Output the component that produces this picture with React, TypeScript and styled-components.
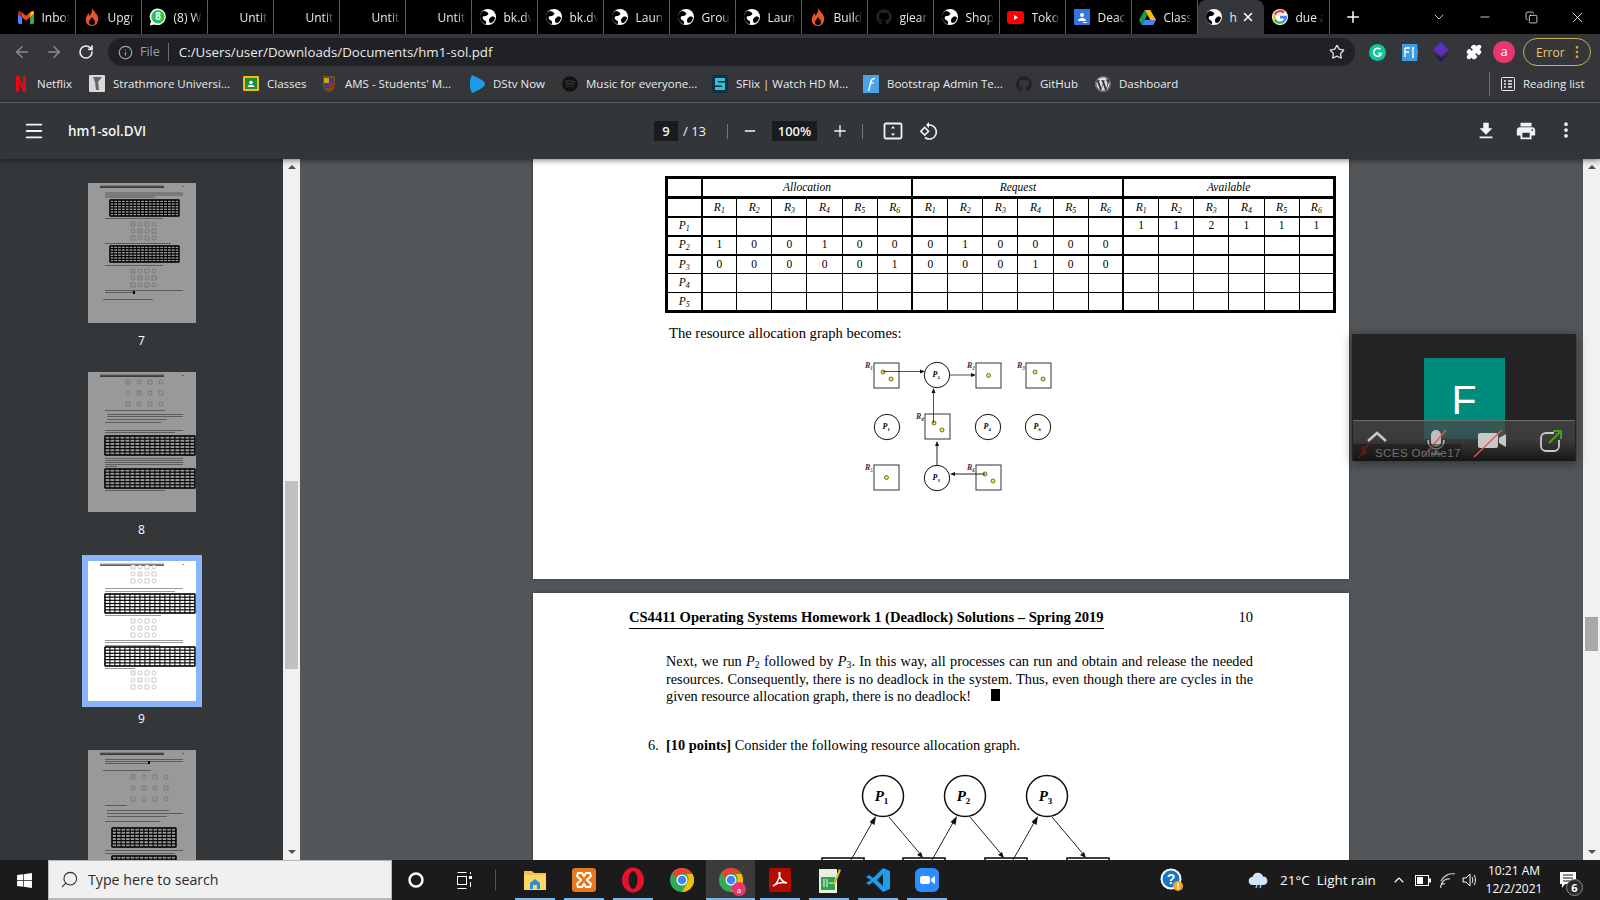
import React from 'react';
import styled, { createGlobalStyle } from 'styled-components';
import {
  ArrowLeft, ArrowRight, RotateCw, Info, Star, Puzzle, Menu, Minus, Plus,
  MoreVertical, X, ChevronDown, ChevronUp, Search, Copy,
} from 'lucide-react';
import { FaGithub, FaWordpress, FaSpotify, FaWindows } from 'react-icons/fa';
import { MdFileDownload, MdPrint } from 'react-icons/md';

const GlobalStyle = createGlobalStyle`
  html, body { margin: 0; padding: 0; height: 100%; overflow: hidden; background: #000; }
  * { box-sizing: border-box; }
`;

const Screen = styled.div`
  width: 1600px;
  height: 900px;
  display: flex;
  flex-direction: column;
  font-family: "Open Sans", "Noto Sans", sans-serif;
  overflow: hidden;
  position: relative;
`;

/* ---------- tab strip ---------- */
const TabStrip = styled.div`
  height: 34px;
  flex: none;
  background: #000;
  display: flex;
  padding-left: 9.5px;
  position: relative;
`;

const Tab = styled.div<{ $active?: boolean }>`
  width: 66px;
  height: 34px;
  flex: none;
  display: flex;
  align-items: center;
  gap: 7px;
  padding-left: 7px;
  color: #e8eaed;
  font-size: 12px;
  position: relative;
  background: ${p => (p.$active ? '#35363a' : 'transparent')};
  border-radius: ${p => (p.$active ? '8px 8px 0 0' : '0')};
  border-right: ${p => (p.$active ? 'none' : '1px solid #5a5a5a')};
  background-clip: ${p => (p.$active ? 'border-box' : 'content-box')};
`;

const TabIcon = styled.span`
  width: 18px;
  height: 18px;
  flex: none;
  display: flex;
  align-items: center;
  justify-content: center;
`;

const TabText = styled.span`
  width: 28px;
  overflow: hidden;
  white-space: nowrap;
  -webkit-mask-image: linear-gradient(90deg, #000 70%, transparent);
  mask-image: linear-gradient(90deg, #000 70%, transparent);
`;

const TabClose = styled(X)`
  position: absolute;
  right: 9px;
  top: 10px;
  color: #fff;
`;

const NewTab = styled.div`
  width: 46px;
  display: flex;
  align-items: center;
  justify-content: center;
  color: #fff;
`;

const WindowControls = styled.div`
  margin-left: auto;
  display: flex;
  align-items: center;
  color: #f0f0f0;
`;

const WinButton = styled.div<{ $w: number }>`
  width: ${p => p.$w}px;
  display: flex;
  justify-content: center;
`;

/* ---------- address row ---------- */
const AddressRow = styled.div`
  height: 33px;
  flex: none;
  background: #35363a;
  display: flex;
  align-items: center;
  padding: 3px 9px 0 0;
  color: #dadce0;
`;

const NavButton = styled.div<{ $w: number; $dim?: boolean }>`
  width: ${p => p.$w}px;
  flex: none;
  display: flex;
  justify-content: center;
  color: ${p => (p.$dim ? '#8a8b8e' : '#e8eaed')};
`;

const Omnibox = styled.div`
  width: 1247px;
  height: 28px;
  flex: none;
  margin-left: 1px;
  border-radius: 14px;
  background: #202124;
  display: flex;
  align-items: center;
  padding: 0 10px;
  font-size: 13.3px;
`;

const FileChip = styled.span`
  color: #9aa0a6;
  margin-left: 7px;
  padding-right: 8px;
  border-right: 1px solid #6d6f72;
  font-size: 12.5px;
  line-height: 18px;
`;

const Url = styled.span`
  color: #e8eaed;
  margin-left: 10px;
`;

const StarButton = styled(Star)`
  margin-left: auto;
  color: #dadce0;
`;

const ExtSlot = styled.div<{ $w: number }>`
  width: ${p => p.$w}px;
  flex: none;
  display: flex;
  justify-content: center;
  align-items: center;
`;

const Avatar = styled.div`
  width: 22px;
  height: 22px;
  border-radius: 50%;
  background: #e9366f;
  color: #fff;
  font-size: 13px;
  display: flex;
  align-items: center;
  justify-content: center;
  padding-bottom: 2px;
`;

const ErrorPill = styled.div`
  width: 68px;
  height: 28px;
  flex: none;
  border: 1px solid #d3ab5b;
  border-radius: 14px;
  color: #f1c776;
  font-size: 12px;
  display: flex;
  align-items: center;
  justify-content: space-between;
  padding: 0 5px 0 12px;
`;

/* ---------- bookmarks ---------- */
const BookmarkBar = styled.div`
  height: 36px;
  flex: none;
  background: #35363a;
  border-bottom: 1px solid #6a6b6e;
  display: flex;
  align-items: center;
  padding: 0 0 2px 13px;
  font-size: 11.5px;
  color: #e8eaed;
  white-space: nowrap;
`;

const Bookmark = styled.div<{ $w: number }>`
  width: ${p => p.$w}px;
  flex: none;
  display: flex;
  align-items: center;
  gap: 8px;
`;

const BookmarkIcon = styled.span`
  width: 16px;
  height: 16px;
  flex: none;
  display: flex;
  align-items: center;
  justify-content: center;
`;

const ReadingList = styled.div`
  margin-left: auto;
  display: flex;
  align-items: center;
  gap: 8px;
  border-left: 1px solid #6a6b6e;
  height: 24px;
  width: 111px;
  padding-left: 11px;
`;

/* ---------- pdf toolbar ---------- */
const PdfToolbar = styled.div`
  height: 56px;
  flex: none;
  background: #323639;
  display: flex;
  align-items: center;
  color: #f1f3f4;
  position: relative;
  z-index: 2;
  box-shadow: 0 1px 6px rgba(0, 0, 0, 0.55);
`;

const MenuSlot = styled.div`
  width: 68px;
  flex: none;
  display: flex;
  justify-content: center;
`;

const DocTitle = styled.div`
  width: 586px;
  flex: none;
  font-size: 13.5px;
  font-weight: 600;
`;

const NumField = styled.div<{ $w: number }>`
  width: ${p => p.$w}px;
  height: 20px;
  flex: none;
  background: #191b1c;
  font-size: 13px;
  font-weight: 600;
  display: flex;
  align-items: center;
  justify-content: center;
`;

const PageTotal = styled.div`
  width: 49px;
  flex: none;
  font-size: 13px;
  padding-left: 5px;
`;

const ToolDivider = styled.div`
  width: 1px;
  height: 15px;
  flex: none;
  background: #70757a;
`;

const ToolSlot = styled.div<{ $w: number }>`
  width: ${p => p.$w}px;
  flex: none;
  display: flex;
  justify-content: center;
  svg { flex: none; }
`;

const ToolRight = styled.div`
  margin-left: auto;
  display: flex;
  padding-right: 14px;
`;

/* ---------- body ---------- */
const Workspace = styled.div`
  flex: 1;
  min-height: 0;
  display: flex;
`;

const Sidebar = styled.div`
  width: 300px;
  flex: none;
  display: flex;
  background: #33373a;
`;

const ThumbList = styled.div`
  width: 283px;
  flex: none;
  display: flex;
  flex-direction: column;
  align-items: center;
  padding-top: 18px;
  overflow: hidden;
`;

const ThumbFrame = styled.div<{ $selected?: boolean }>`
  flex: none;
  padding: 6px;
  background: ${p => (p.$selected ? '#8ab4f8' : 'transparent')};
  display: flex;
`;

const ThumbNumber = styled.div`
  flex: none;
  height: 16px;
  line-height: 16px;
  margin: 4px 0 17px;
  color: #fff;
  font-size: 12px;
`;

const Track = styled.div`
  width: 17px;
  flex: none;
  background: #f1f1f1;
  display: flex;
  flex-direction: column;
  align-items: center;
`;

const ScrollArrow = styled.div<{ $down?: boolean }>`
  width: 0;
  height: 0;
  flex: none;
  margin: ${p => (p.$down ? 'auto 0 6px' : '6px 0 0')};
  border-left: 4px solid transparent;
  border-right: 4px solid transparent;
  border-${p => (p.$down ? 'top' : 'bottom')}: 4px solid #505050;
`;

const ScrollThumb = styled.div<{ $top: number; $h: number }>`
  width: 13px;
  height: ${p => p.$h}px;
  margin-top: ${p => p.$top}px;
  flex: none;
  background: #c1c1c1;
`;

const Viewer = styled.div`
  flex: 1;
  min-width: 0;
  background: #525659;
  display: flex;
  flex-direction: column;
  align-items: center;
  overflow: hidden;
  position: relative;
  padding-right: 18px;
`;

const MainTrack = styled(Track)`
  position: absolute;
  right: 0;
  top: 0;
  bottom: 0;
`;

const MainThumb = styled(ScrollThumb)`
  background: #a8a8a8;
`;

const Sheet = styled.div<{ $h: number }>`
  width: 816px;
  height: ${p => p.$h}px;
  flex: none;
  background: #fff;
  color: #000;
  font-family: "Liberation Serif", "Times New Roman", serif;
  box-shadow: 0 0 3px rgba(0, 0, 0, 0.35);
`;

const TopSheet = styled(Sheet)`
  padding: 17px 13px 0 132px;
  margin-bottom: 14px;
`;

const BottomSheet = styled(Sheet)`
  padding: 15px 96px 0 96px;
`;

const Matrix = styled.table`
  width: 671px;
  border-collapse: collapse;
  table-layout: fixed;
  border: 3px solid #000;
  font-size: 11.5px;
  text-align: center;
`;

const Cell = styled.td<{ $h?: number; $thickB?: number; $thickR?: number }>`
  height: ${p => p.$h ?? 19}px;
  padding: 0;
  border: 1px solid #000;
  border-bottom-width: ${p => p.$thickB ?? 1}px;
  border-right-width: ${p => p.$thickR ?? 1}px;
  line-height: 1;
`;

const HeadCell = styled(Cell)`
  font-style: italic;
`;

const Sub = styled.sub`
  font-size: 0.68em;
  line-height: 0;
  vertical-align: -0.25em;
`;

const Caption = styled.p`
  margin: 11px 0 0 4px;
  font-size: 14.6px;
  line-height: 18px;
`;

const GraphOne = styled.svg`
  display: block;
  margin: 13px 0 0 185px;
`;

const RunningHead = styled.div`
  display: flex;
  justify-content: space-between;
  align-items: flex-end;
  height: 21px;
  font-size: 14.57px;
  line-height: 18px;
`;

const HeadTitle = styled.span`
  font-weight: 700;
  border-bottom: 1.5px solid #000;
  height: 21px;
  white-space: nowrap;
`;

const HeadPage = styled.span`
  height: 21px;
`;

const Body = styled.p`
  margin: 24px 0 0 37px;
  font-size: 14.3px;
  word-spacing: -0.2px;
  line-height: 17.7px;
  text-align: justify;
`;

const Tombstone = styled.span`
  display: inline-block;
  width: 9px;
  height: 12px;
  margin-left: 20px;
  background: #000;
`;

const Question = styled.div`
  margin: 30px 0 0 19px;
  font-size: 14.4px;
  line-height: 18px;
  white-space: nowrap;
`;

const GraphTwo = styled.svg`
  display: block;
  margin: 16px 0 0 -1px;
  overflow: visible;
`;

/* ---------- floating zoom tile ---------- */
const ZoomTile = styled.div`
  position: absolute;
  left: 1352px;
  top: 334px;
  width: 224px;
  height: 127px;
  background: #232323;
  box-shadow: 0 2px 10px rgba(0, 0, 0, 0.45);
  display: flex;
  justify-content: center;
  z-index: 3;
  overflow: hidden;
  padding-top: 24px;
`;

const ZoomAvatar = styled.div`
  width: 81px;
  height: 81px;
  background: #008c7c;
  color: #fff;
  font-family: "Liberation Sans", Arial, sans-serif;
  font-size: 41px;
  display: flex;
  align-items: center;
  justify-content: center;
  padding-top: 3px;
`;

const ZoomBar = styled.div`
  position: absolute;
  left: 1px;
  right: 1px;
  bottom: 0;
  height: 41px;
  border-top: 1px solid #6e6e6e;
  background: linear-gradient(180deg, rgba(72, 72, 72, 0.72), rgba(66, 66, 66, 0.78) 45%, rgba(22, 22, 22, 0.96));
`;

const ZoomBarIcons = styled.svg`
  position: absolute;
  left: 0;
  top: 0;
`;

const ZoomName = styled.span`
  position: absolute;
  left: 0;
  bottom: 0;
  width: 108px;
  height: 17px;
  line-height: 17px;
  padding-left: 22px;
  background: rgba(20, 20, 20, 0.45);
  color: #6f7174;
  font-size: 11.7px;
  letter-spacing: 0.3px;
  white-space: nowrap;
  font-family: "Liberation Sans", Arial, sans-serif;
`;

/* ---------- taskbar ---------- */
const Taskbar = styled.div`
  height: 40px;
  flex: none;
  background: #1b1b1b;
  display: flex;
  align-items: stretch;
  color: #fff;
  position: relative;
  z-index: 4;
`;

const StartSlot = styled.div`
  width: 48px;
  flex: none;
  display: flex;
  align-items: center;
  justify-content: center;
`;

const SearchBox = styled.div`
  width: 344px;
  flex: none;
  background: #f0f0f0;
  border: 1px solid #b8b8b8;
  border-width: 1px 1px 2px;
  display: flex;
  align-items: center;
  color: #2b2b2b;
  font-size: 14.2px;
  padding-left: 11px;
  gap: 9px;
`;

const SearchGlass = styled(Search)`
  transform: scaleX(-1);
`;

const TrayButton = styled.div<{ $w: number }>`
  width: ${p => p.$w}px;
  flex: none;
  display: flex;
  align-items: center;
  justify-content: center;
`;

const TaskDivider = styled.div`
  width: 1px;
  height: 20px;
  flex: none;
  align-self: center;
  background: #555;
`;

const AppSlot = styled.div<{ $open?: boolean; $active?: boolean }>`
  width: 49px;
  flex: none;
  display: flex;
  align-items: center;
  justify-content: center;
  position: relative;
  background: ${p => (p.$active ? '#3b3b3b' : 'transparent')};
  &::after {
    content: '';
    display: ${p => (p.$open ? 'block' : 'none')};
    position: absolute;
    left: ${p => (p.$active ? 0 : 4.5)}px;
    right: ${p => (p.$active ? 0 : 4.5)}px;
    bottom: 0;
    height: 2px;
    background: #76b9ed;
  }
`;

const ProfileDot = styled.span`
  position: absolute;
  left: 26px;
  top: 22px;
  width: 14px;
  height: 14px;
  border-radius: 50%;
  background: #e9366f;
  font-size: 8px;
  display: flex;
  align-items: center;
  justify-content: center;
`;

const TaskSpacer = styled.div`
  width: 200px;
  flex: none;
`;

const Weather = styled.div`
  display: flex;
  align-items: center;
  gap: 11px;
  font-size: 13.5px;
  width: 143px;
  flex: none;
  white-space: pre;
`;

const Clock = styled.div`
  width: 62px;
  flex: none;
  font-size: 12px;
  line-height: 18px;
  text-align: center;
  white-space: nowrap;
  display: flex;
  flex-direction: column;
  justify-content: center;
`;

const Notify = styled.div`
  flex: 1;
  display: flex;
  align-items: center;
  justify-content: center;
  padding-right: 9px;
  position: relative;
`;

const NotifyBadge = styled.span`
  position: absolute;
  right: 17px;
  bottom: 4px;
  width: 17px;
  height: 17px;
  border-radius: 50%;
  background: #2a2a2a;
  border: 1px solid #8a8a8a;
  font-size: 11px;
  font-weight: 700;
  display: flex;
  align-items: center;
  justify-content: center;
`;

/* ---------- icons ---------- */
const Gmail = () => (
  <svg width="16" height="13" viewBox="0 0 16 13">
    <path d="M0 3v8.500C0 12.300.7 13 1.500 13H4V6.500L0 3z" fill="#4285f4" />
    <path d="M12 13h2.500c.8 0 1.500-.7 1.500-1.500V3l-4 3.500z" fill="#34a853" />
    <path d="M12 1.500v5L16 3V1.500C16 .2 14.600-.4 13.600.4z" fill="#fbbc04" />
    <path d="M4 6.500v-5L8 4.700l4-3.200v5L8 9.600z" fill="#ea4335" />
    <path d="M0 1.500V3l4 3.500v-5L2.400.4C1.400-.4 0 .2 0 1.500z" fill="#c5221f" />
  </svg>
);

const Flame = () => (
  <svg width="14" height="18" viewBox="0 0 14 18">
    <path d="M7 0c1 3 5 5 6 9 1 5-2 9-6 9s-7-3-6-8c.5-2 2-3 2-5 1 1 1.500 2 1.500 3C6 6 7.500 3 7 0zm0 9c-.5 2-3 3-3 5.500C4 16 5.500 17 7 17s3-1 3-2.800C10 12 8 11 7 9z" fill="#e4572e" />
  </svg>
);

const WhatsApp = () => (
  <svg width="18" height="18" viewBox="0 0 18 18">
    <path d="M9 .5a8.300 8.300 0 0 0-7 12.700L.8 17.500l4.400-1.100A8.300 8.300 0 1 0 9 .5z" fill="#fff" />
    <circle cx="9" cy="8.800" r="6.700" fill="#25c35a" />
    <text x="9" y="12.300" fontSize="10" fontWeight="700" textAnchor="middle" fill="#fff" fontFamily="Liberation Sans">8</text>
  </svg>
);

const GlobeIcon = () => (
  <svg width="16" height="16" viewBox="0 0 16 16">
    <circle cx="8" cy="8" r="8" fill="#fff" />
    <path d="M4 2c2 0 3 1 4 2S7 7 5 7 2 8 3 10s3 1 3 3 0 2-1 2C2 14 0 11 0 8s2-6 4-6zM11 8c2-1 4 0 4 1s-2 5-4 5-2-2-2-3 1-2 2-3z" fill="#000" />
  </svg>
);

const YouTube = () => (
  <svg width="17" height="13" viewBox="0 0 17 13">
    <rect width="17" height="13" rx="3" fill="#f00" />
    <path d="M7 4l4 2.500L7 9z" fill="#fff" />
  </svg>
);

const Classroom = () => (
  <svg width="16" height="16" viewBox="0 0 16 16">
    <rect width="16" height="16" rx="1" fill="#2f78e4" />
    <circle cx="8" cy="6" r="2" fill="#fff" />
    <path d="M4 12c0-2 2-3 4-3s4 1 4 3z" fill="#fff" />
    <rect x="9" y="13" width="4" height="1" fill="#fff" />
  </svg>
);

const Drive = () => (
  <svg width="17" height="15" viewBox="0 0 17 15">
    <path d="M5.700 0h5.600l5.700 10h-5.600z" fill="#fbbc04" />
    <path d="M5.700 0L0 10l2.800 5 5.600-10z" fill="#0f9d58" />
    <path d="M2.800 15h11.400l2.800-5H5.600z" fill="#4285f4" />
  </svg>
);

const GoogleG = () => (
  <svg width="16" height="16" viewBox="0 0 16 16">
    <circle cx="8" cy="8" r="8" fill="#fff" />
    <path d="M8 3.200a4.800 4.800 0 0 1 3.200 1.200l1.700-1.700A7 7 0 0 0 1.800 4.800l2 1.500A4.800 4.800 0 0 1 8 3.200z" fill="#ea4335" />
    <path d="M1.800 4.800a7 7 0 0 0 0 6.400l2-1.500a4.800 4.800 0 0 1 0-3.400z" fill="#fbbc04" />
    <path d="M8 12.800a4.800 4.800 0 0 1-4.200-3.100l-2 1.500A7 7 0 0 0 12.700 13l-1.900-1.400c-.7.7-1.700 1.200-2.800 1.200z" fill="#34a853" />
    <path d="M15 8c0-.5 0-.9-.1-1.300H8v2.700h3.900c-.2.900-.6 1.600-1.100 2.200l1.900 1.400C14 11.800 15 10 15 8z" fill="#4285f4" />
  </svg>
);

const Netflix = () => (
  <svg width="10" height="16" viewBox="0 0 10 16">
    <path d="M0 0h3l4 9V0h3v16l-3-.6L3 7v8.500L0 16z" fill="#e50914" />
  </svg>
);

const Strathmore = () => (
  <svg width="16" height="17" viewBox="0 0 16 17">
    <rect width="16" height="17" rx="1" fill="#d9d9d9" />
    <path d="M4 2h9L9 7l1 8H7L6 7z" fill="#666" />
  </svg>
);

const ClassesIcon = () => (
  <svg width="16" height="15" viewBox="0 0 16 15">
    <rect width="16" height="15" rx="1" fill="#fbbc04" />
    <rect x="2" y="2" width="12" height="11" fill="#1e8e3e" />
    <circle cx="8" cy="6.500" r="1.800" fill="#fff" />
    <path d="M4.500 11c0-1.500 1.500-2 3.500-2s3.500.5 3.500 2z" fill="#fff" />
  </svg>
);

const Crest = () => (
  <svg width="14" height="18" viewBox="0 0 14 18">
    <path d="M1 1h12v10c0 3-3 5-6 6-3-1-6-3-6-6z" fill="#7a4a16" />
    <rect x="2" y="3" width="5" height="5" fill="#c7a227" />
    <rect x="7" y="3" width="5" height="5" fill="#3c3f8f" />
    <rect x="2" y="8" width="5" height="5" fill="#3c3f8f" />
    <rect x="7" y="8" width="5" height="5" fill="#a8281f" />
  </svg>
);

const Dstv = () => (
  <svg width="15" height="18" viewBox="0 0 15 18">
    <path d="M2 0c7 3 13 6 13 9s-6 6-13 9C-1 13-1 5 2 0z" fill="#1e9be8" />
  </svg>
);

const SFlix = () => (
  <svg width="16" height="18" viewBox="0 0 16 18">
    <rect width="16" height="18" rx="3" fill="#123040" />
    <path d="M3 3h10v3H6v1.500h7V15H3v-3h7v-1.500H3z" fill="#35c2d0" />
  </svg>
);

const BootstrapIcon = () => (
  <svg width="16" height="18" viewBox="0 0 16 18">
    <rect width="16" height="18" fill="#4aa3e8" />
    <path d="M5 16l2-9c.4-2 1.500-4 5-4l-.3 1.200c-2 0-2.800 1-3.200 3h2.500l-.3 1.200H8.200L6.400 16z" fill="#fff" />
  </svg>
);

const ReadingIcon = () => (
  <svg width="14" height="14" viewBox="0 0 14 14" fill="none" stroke="#e8eaed">
    <rect x=".5" y=".5" width="13" height="13" rx="1" />
    <path d="M3 4h2M7 4h4M3 7h2M7 7h4M3 10h2M7 10h4" strokeWidth="1.500" />
  </svg>
);

const Grammarly = () => (
  <svg width="17" height="17" viewBox="0 0 17 17">
    <circle cx="8.500" cy="8.500" r="8.500" fill="#15c39a" />
    <path d="M11.500 5.500a4 4 0 1 0 1 4H9" fill="none" stroke="#fff" strokeWidth="1.500" />
  </svg>
);

const FontIcon = () => (
  <svg width="17" height="17" viewBox="0 0 17 17">
    <path d="M1 0h15l1 8.500L16 17H1z" fill="#3d9ee5" />
    <path d="M4 4h5M4 4v9M4 8h4M12 4v9M11 4h2M11 13h2" stroke="#fff" strokeWidth="1.400" fill="none" />
  </svg>
);

const Gem = () => (
  <svg width="16" height="20" viewBox="0 0 16 20">
    <path d="M8 0l8 8-8 6-8-6z" fill="#5b2fc4" />
    <path d="M0 11l8 9 8-9-8 5z" fill="#26136b" />
  </svg>
);

const FitPage = () => (
  <svg width="20" height="20" viewBox="0 0 20 20" fill="none" stroke="#f1f3f4" strokeWidth="1.800">
    <rect x="1.500" y="2.500" width="17" height="15" rx="1.500" />
    <path d="M10 5l-2 2.500h4zM10 15l-2-2.500h4z" fill="#f1f3f4" stroke="none" />
  </svg>
);

const RotateIcon = () => (
  <svg width="20" height="20" viewBox="0 0 20 20" fill="none" stroke="#f1f3f4" strokeWidth="1.600">
    <path d="M10 4a7 7 0 1 1-4 12.500" />
    <path d="M10 1v6L7 4z" fill="#f1f3f4" stroke="none" />
    <rect x="3" y="7.500" width="5.500" height="5.500" transform="rotate(45 5.700 10.200)" />
  </svg>
);

const Explorer = () => (
  <svg width="22" height="22" viewBox="0 0 22 22">
    <path d="M0 2h8l2 2h12v16H0z" fill="#f5c242" />
    <rect y="6" width="22" height="15" fill="#fbd766" />
    <path d="M6 14l5-4 5 4v6h-3v-4H9v4H6z" fill="#2a8fd8" />
  </svg>
);

const Xampp = () => (
  <svg width="24" height="24" viewBox="0 0 24 24">
    <rect width="24" height="24" rx="3" fill="#e8791f" />
    <path d="M6 5h4l2 3 2-3h4l1 3-4 4 4 4-1 3h-4l-2-3-2 3H6l-1-3 4-4-4-4z" fill="none" stroke="#fff" strokeWidth="2" />
  </svg>
);

const Opera = () => (
  <svg width="24" height="26" viewBox="0 0 24 26">
    <ellipse cx="12" cy="13" rx="11" ry="12.500" fill="#e8132b" />
    <ellipse cx="12" cy="13" rx="4.500" ry="9" fill="#1b1b1b" />
  </svg>
);

const Chrome = () => (
  <svg width="24" height="24" viewBox="0 0 24 24">
    <circle cx="12" cy="12" r="12" fill="#34a853" />
    <path d="M12 0a12 12 0 0 1 10.400 6H12a6 6 0 0 0-5.600 3.900L2.100 5A12 12 0 0 1 12 0z" fill="#ea4335" />
    <path d="M22.400 6A12 12 0 0 1 12 24l5.200-9A6 6 0 0 0 16 6z" fill="#fbbc04" />
    <circle cx="12" cy="12" r="5.500" fill="#fff" />
    <circle cx="12" cy="12" r="4.300" fill="#4285f4" />
  </svg>
);

const AcrobatBox = () => (
  <svg width="22" height="24" viewBox="0 0 22 24">
    <rect width="22" height="24" rx="2" fill="#b30b00" />
    <path d="M4 18c3-1 6-6 7-12 0-2-1-2-1 0 1 5 3 8 8 9-4-1-10 0-14 3z" fill="none" stroke="#fff" strokeWidth="1.500" />
  </svg>
);

const Notes = () => (
  <svg width="24" height="26" viewBox="0 0 24 26">
    <rect x="2" y="2" width="18" height="24" fill="#e8efe0" />
    <rect x="4" y="10" width="14" height="13" fill="#2ea44f" />
    <path d="M7 12v8M10 12v8M12 16h4" stroke="#fff" />
    <path d="M16 17L22 2l2 1-6 15z" fill="#e2b33c" />
  </svg>
);

const VsCode = () => (
  <svg width="24" height="24" viewBox="0 0 24 24">
    <path d="M17 0l7 3v18l-7 3L7 14l-4 3-3-2 5-3-5-3 3-2 4 3z" fill="#1f9cf0" />
    <path d="M17 6l-6 6 6 6z" fill="#1b1b1b" />
  </svg>
);

const ZoomApp = () => (
  <svg width="24" height="24" viewBox="0 0 24 24">
    <rect width="24" height="24" rx="6" fill="#2d8cff" />
    <rect x="5" y="8" width="10" height="8" rx="2" fill="#fff" />
    <path d="M16 11l4-3v8l-4-3z" fill="#fff" />
  </svg>
);

const HelpBadge = () => (
  <svg width="24" height="24" viewBox="0 0 24 24">
    <circle cx="11" cy="11" r="10.500" fill="#fff" />
    <circle cx="11" cy="11" r="8.500" fill="#1778c6" />
    <text x="11" y="16" textAnchor="middle" fontSize="14" fontWeight="700" fill="#fff" fontFamily="Liberation Sans">?</text>
    <circle cx="18" cy="18" r="5" fill="#f5a623" />
    <rect x="17.300" y="15" width="1.500" height="6" fill="#fff" />
  </svg>
);

const Cloud = () => (
  <svg width="21" height="17" viewBox="0 0 21 17">
    <path d="M5 13a4 4 0 0 1-.5-8A5.500 5.500 0 0 1 15 4.500a4.300 4.300 0 0 1 1 8.500z" fill="#cfe6fa" />
    <path d="M9 13l-1 3M13 13l-1 3" stroke="#7fbdf0" strokeWidth="1.500" />
  </svg>
);

const Battery = () => (
  <svg width="16" height="11" viewBox="0 0 16 11" fill="none" stroke="#fff">
    <rect x=".5" y=".5" width="13" height="10" />
    <rect x="2" y="2" width="6" height="7" fill="#fff" stroke="none" />
    <rect x="14" y="3.500" width="2" height="4" fill="#fff" stroke="none" />
  </svg>
);

const Wifi = () => (
  <svg width="16" height="15" viewBox="0 0 16 15" fill="none" stroke="#cfcfcf" strokeWidth="1.200">
    <path d="M1 8a13 13 0 0 1 14-7M1 12a8 8 0 0 1 9-6M1 15a3 3 0 0 1 4-4" />
  </svg>
);

const Speaker = () => (
  <svg width="16" height="16" viewBox="0 0 16 16" fill="none" stroke="#fff">
    <path d="M1 6h3l4-4v12l-4-4H1z" />
    <path d="M10 5c1 2 1 4 0 6M12 3c2 3 2 7 0 10" />
  </svg>
);

const NoteIcon = () => (
  <svg width="16" height="16" viewBox="0 0 16 16">
    <path d="M0 0h16v12H5l-3 4v-4H0z" fill="#fff" />
    <path d="M3 3h10M3 6h10M3 9h7" stroke="#1b1b1b" />
  </svg>
);

const TaskView = () => (
  <svg width="17" height="17" viewBox="0 0 17 17" fill="none" stroke="#fff">
    <path d="M2.500 .5h9M2.500 16.500h9" />
    <rect x="2.500" y="4.500" width="9" height="8" />
    <rect x="14" y="4" width="3" height="3" fill="#fff" stroke="none" />
    <path d="M15.500 10v5M15.500 0v2" />
  </svg>
);

const RingIcon = () => (
  <svg width="16" height="16" viewBox="0 0 16 16">
    <circle cx="8" cy="8" r="6.500" fill="none" stroke="#fff" strokeWidth="2.500" />
  </svg>
);

/* ---------- resource allocation graph ---------- */
const Dot = ({ x, y }: { x: number; y: number }) => (
  <circle cx={x} cy={y} r="2" fill="#f4ee2a" stroke="#333" strokeWidth=".7" />
);

const ResBox = ({ x, y, label, two }: { x: number; y: number; label: string; two?: boolean }) => (
  <g>
    <rect x={x} y={y} width="25" height="25" fill="#fff" stroke="#333" strokeWidth="1" />
    <text x={x - 5} y={y + 5} fontSize="8" fontStyle="italic" fontWeight="700" fill="#333" fontFamily="Liberation Serif" textAnchor="middle">
      {label}
    </text>
    {two ? (
      <>
        <Dot x={x + 9} y={y + 9} />
        <Dot x={x + 17} y={y + 16} />
      </>
    ) : (
      <Dot x={x + 12.500} y={y + 12.500} />
    )}
  </g>
);

const Proc = ({ x, y, n, r = 12.700, fs = 8 }: { x: number; y: number; n: number; r?: number; fs?: number }) => (
  <g>
    <circle cx={x} cy={y} r={r} fill="#fff" stroke="#111" strokeWidth={r > 15 ? 1.500 : 1} />
    <text x={x - fs * 0.1} y={y + fs * 0.3} fontSize={fs} fontStyle="italic" fontWeight="700" textAnchor="middle" fontFamily="Liberation Serif">
      P<tspan fontSize={fs * 0.6} dy={fs * 0.2} fontStyle="normal">{n}</tspan>
    </text>
  </g>
);

const Arrow = ({ d, tip, sw = 0.8 }: { d: string; tip: string; sw?: number }) => (
  <g>
    <path d={d} fill="none" stroke="#222" strokeWidth={sw} />
    <polygon points={tip} fill="#111" />
  </g>
);

const AllocationGraph = () => (
  <GraphOne width="210" height="150" viewBox="850 355 210 150">
    <ResBox x={874} y={363} label="R₁" two />
    <ResBox x={976} y={363} label="R₂" />
    <ResBox x={1026} y={363} label="R₃" two />
    <ResBox x={925} y={414} label="R₄" two />
    <ResBox x={874} y={465} label="R₅" />
    <ResBox x={976} y={465} label="R₆" two />
    <Proc x={937} y={375} n={2} />
    <Proc x={887} y={427} n={1} />
    <Proc x={988} y={427} n={4} />
    <Proc x={1038} y={427} n={6} />
    <Proc x={937} y={478} n={3} />
    <Arrow d="M883 371.500H922" tip="920,369.500 925,371.500 920,373.500" />
    <Arrow d="M950 375H972" tip="971,373 976,375 971,377" />
    <Arrow d="M933.500 423V392" tip="931.500,393 933.500,388 935.500,393" />
    <Arrow d="M937 465V445" tip="935,446 937,441 939,446" sw={1} />
    <Arrow d="M985 474H954" tip="955,472 950,474 955,476" sw={1} />
  </GraphOne>
);

const ConsiderGraph = () => (
  <GraphTwo width="660" height="120" viewBox="628 770 660 120">
    <Proc x={883} y={796} n={1} r={20.500} fs={15} />
    <Proc x={965} y={796} n={2} r={20.500} fs={15} />
    <Proc x={1047} y={796} n={3} r={20.500} fs={15} />
    <Arrow d="M851 860L873 821" tip="869.500,822 876,816 874.500,825" sw={1} />
    <Arrow d="M932 860L954 821" tip="950.500,822 957,816 955.500,825" sw={1} />
    <Arrow d="M1013 860L1035 821" tip="1031.500,822 1038,816 1036.500,825" sw={1} />
    <Arrow d="M889 817L921 855" tip="917,855 923,858 921,852" sw={1} />
    <Arrow d="M970 817L1002 855" tip="998,855 1004,858 1002,852" sw={1} />
    <Arrow d="M1052 817L1084 855" tip="1080,855 1086,858 1084,852" sw={1} />
    <rect x="822" y="858" width="42" height="30" fill="none" stroke="#000" strokeWidth="1.500" />
    <rect x="903" y="858" width="42" height="30" fill="none" stroke="#000" strokeWidth="1.500" />
    <rect x="985" y="858" width="42" height="30" fill="none" stroke="#000" strokeWidth="1.500" />
    <rect x="1067" y="858" width="42" height="30" fill="none" stroke="#000" strokeWidth="1.500" />
  </GraphTwo>
);

/* ---------- thumbnails ---------- */
const MiniTable = ({ x, y, w, h, cols }: { x: number; y: number; w: number; h: number; cols: number }) => {
  const rowCount = 6;
  return (
    <g>
      <rect x={x} y={y} width={w} height={h} fill="#fff" />
      {Array.from({ length: cols + 1 }, (_, i) => (
        <rect key={i} x={x + (i * w) / cols - 0.6} y={y} width="1" height={h} fill="#000" />
      ))}
      {Array.from({ length: rowCount + 1 }, (_, i) => (
        <rect key={i} x={x} y={y + (i * h) / rowCount - 0.6} width={w} height="1.200" fill="#000" />
      ))}
      <rect x={x} y={y} width={w} height={h} fill="none" stroke="#000" strokeWidth="1" />
    </g>
  );
};

const MiniText = ({ y, x = 17, w = 78 }: { y: number; x?: number; w?: number }) => (
  <rect x={x} y={y} width={w} height="1" fill="#9a9a9a" />
);

const MiniGraph = ({ y, cx = 46, step = 7 }: { y: number; cx?: number; step?: number }) => (
  <g fill="#fff" stroke="#aaa" strokeWidth=".6">
    {[0, 1, 2].map(row =>
      [0, 1, 2, 3].map(col =>
        (row + col) % 2 === 0 ? (
          <rect key={`${row}${col}`} x={cx + col * step - 2} y={y + row * step - 2} width="4" height="4" />
        ) : (
          <circle key={`${row}${col}`} cx={cx + col * step} cy={y + row * step} r="2" />
        ),
      ),
    )}
    <circle cx={cx} cy={y} r=".6" fill="#c8c03a" stroke="none" />
    <circle cx={cx + step} cy={y + step} r=".6" fill="#c8c03a" stroke="none" />
  </g>
);

const MiniHead = () => (
  <g>
    <rect x="12" y="2.500" width="64" height="1.400" fill="#999" />
    <rect x="12" y="3.800" width="64" height=".8" fill="#000" />
    <rect x="94" y="3" width="2" height=".8" fill="#888" />
  </g>
);

const ThumbSvg = styled.svg`
  display: block;
  background: #fff;
`;

const Thumb = ({ dim, children }: { dim?: boolean; children: React.ReactNode }) => (
  <ThumbSvg width="108" height="140" viewBox="0 0 108 140">
    <MiniHead />
    {children}
    {dim && <rect width="108" height="140" fill="#000" opacity=".4" />}
  </ThumbSvg>
);

const tabs: { label: string; icon?: React.ReactNode }[] = [
  { label: 'Inbox', icon: <Gmail /> },
  { label: 'Upgr', icon: <Flame /> },
  { label: '(8) W', icon: <WhatsApp /> },
  { label: 'Untit' },
  { label: 'Untit' },
  { label: 'Untit' },
  { label: 'Untit' },
  { label: 'bk.dv', icon: <GlobeIcon /> },
  { label: 'bk.dv', icon: <GlobeIcon /> },
  { label: 'Laun', icon: <GlobeIcon /> },
  { label: 'Grou', icon: <GlobeIcon /> },
  { label: 'Laun', icon: <GlobeIcon /> },
  { label: 'Build', icon: <Flame /> },
  { label: 'giear', icon: <FaGithub size={16} color="#222" /> },
  { label: 'Shop', icon: <GlobeIcon /> },
  { label: 'Toko', icon: <YouTube /> },
  { label: 'Deac', icon: <Classroom /> },
  { label: 'Class', icon: <Drive /> },
];

const bookmarks: { label: string; w: number; icon: React.ReactNode }[] = [
  { label: 'Netflix', w: 76, icon: <Netflix /> },
  { label: 'Strathmore Universi...', w: 154, icon: <Strathmore /> },
  { label: 'Classes', w: 78, icon: <ClassesIcon /> },
  { label: "AMS - Students' M...", w: 148, icon: <Crest /> },
  { label: 'DStv Now', w: 93, icon: <Dstv /> },
  { label: 'Music for everyone...', w: 150, icon: <FaSpotify size={16} color="#111" /> },
  { label: 'SFlix | Watch HD M...', w: 151, icon: <SFlix /> },
  { label: 'Bootstrap Admin Te...', w: 153, icon: <BootstrapIcon /> },
  { label: 'GitHub', w: 79, icon: <FaGithub size={16} color="#222" /> },
  { label: 'Dashboard', w: 90, icon: <FaWordpress size={16} color="#ddd" /> },
];

const colNames = ['1', '2', '3', '4', '5', '6'];

const rows: { p: number; values: string[]; b?: number }[] = [
  { p: 1, b: 2, values: ['', '', '', '', '', '', '', '', '', '', '', '', '1', '1', '2', '1', '1', '1'] },
  { p: 2, b: 2, values: ['1', '0', '0', '1', '0', '0', '0', '1', '0', '0', '0', '0', '', '', '', '', '', ''] },
  { p: 3, values: ['0', '0', '0', '0', '0', '1', '0', '0', '0', '1', '0', '0', '', '', '', '', '', ''] },
  { p: 4, values: Array(18).fill('') },
  { p: 5, values: Array(18).fill('') },
];

const groupEdge = (i: number) => (i === 5 || i === 11 ? 2 : i === 2 || i === 8 ? 1.5 : 1);

export default function App() {
  return (
    <Screen>
      <GlobalStyle />
      <TabStrip>
        {tabs.map((t, i) => (
          <Tab key={i}>
            <TabIcon>{t.icon}</TabIcon>
            <TabText>{t.label}</TabText>
          </Tab>
        ))}
        <Tab $active>
          <TabIcon><GlobeIcon /></TabIcon>
          <span>h</span>
          <TabClose size={14} strokeWidth={2.5} />
        </Tab>
        <Tab>
          <TabIcon><GoogleG /></TabIcon>
          <TabText>due a</TabText>
        </Tab>
        <NewTab><Plus size={18} strokeWidth={2} /></NewTab>
        <WindowControls>
          <WinButton $w={46}><ChevronDown size={16} strokeWidth={1.2} /></WinButton>
          <WinButton $w={46}><Minus size={14} strokeWidth={1.4} /></WinButton>
          <WinButton $w={46}><Copy size={13} strokeWidth={1.5} /></WinButton>
          <WinButton $w={46}><X size={17} strokeWidth={1.3} /></WinButton>
        </WindowControls>
      </TabStrip>

      <AddressRow>
        <NavButton $w={43} $dim><ArrowLeft size={18} /></NavButton>
        <NavButton $w={22} $dim><ArrowRight size={18} /></NavButton>
        <NavButton $w={42}><RotateCw size={16} strokeWidth={2.5} /></NavButton>
        <Omnibox>
          <Info size={15} color="#9aa0a6" />
          <FileChip>File</FileChip>
          <Url>C:/Users/user/Downloads/Documents/hm1-sol.pdf</Url>
          <StarButton size={16} />
        </Omnibox>
        <ExtSlot $w={44}><Grammarly /></ExtSlot>
        <ExtSlot $w={20}><FontIcon /></ExtSlot>
        <ExtSlot $w={44}><Gem /></ExtSlot>
        <ExtSlot $w={22}><Puzzle size={16} fill="#fff" color="#fff" /></ExtSlot>
        <ExtSlot $w={38}><Avatar>a</Avatar></ExtSlot>
        <ErrorPill>
          Error
          <MoreVertical size={16} color="#f0a020" />
        </ErrorPill>
      </AddressRow>

      <BookmarkBar>
        {bookmarks.map(b => (
          <Bookmark key={b.label} $w={b.w}>
            <BookmarkIcon>{b.icon}</BookmarkIcon>
            {b.label}
          </Bookmark>
        ))}
        <ReadingList>
          <ReadingIcon />
          Reading list
        </ReadingList>
      </BookmarkBar>

      <PdfToolbar>
        <MenuSlot><Menu size={22} /></MenuSlot>
        <DocTitle>hm1-sol.DVI</DocTitle>
        <NumField $w={24}>9</NumField>
        <PageTotal>/ 13</PageTotal>
        <ToolDivider />
        <ToolSlot $w={44}><Minus size={16} strokeWidth={2} /></ToolSlot>
        <NumField $w={45}>100%</NumField>
        <ToolSlot $w={45}><Plus size={18} strokeWidth={1.8} /></ToolSlot>
        <ToolDivider />
        <ToolSlot $w={60}><FitPage /></ToolSlot>
        <ToolSlot $w={12}><RotateIcon /></ToolSlot>
        <ToolRight>
          <ToolSlot $w={40}><MdFileDownload size={22} /></ToolSlot>
          <ToolSlot $w={40}><MdPrint size={22} /></ToolSlot>
          <ToolSlot $w={40}><MoreVertical size={20} strokeWidth={2.5} /></ToolSlot>
        </ToolRight>
      </PdfToolbar>

      <Workspace>
        <Sidebar>
          <ThumbList>
            <ThumbFrame>
              <Thumb dim>
                <MiniText y={9.500} /><MiniText y={11.500} /><MiniText y={13.500} w={50} />
                <MiniTable x={22} y={17} w={69} h={16} cols={18} />
                <MiniText y={35} w={58} />
                <MiniGraph y={41} cx={45} step={7} />
                <MiniText y={60} w={66} />
                <MiniTable x={22} y={63} w={69} h={16} cols={18} />
                <MiniText y={82} w={58} />
                <MiniGraph y={88} cx={45} step={7} />
                <MiniText y={107} /><MiniText y={109} w={28} />
                <rect x="45" y="108" width="2" height="3" fill="#000" />
                <MiniText y={116} x={15} w={50} />
              </Thumb>
            </ThumbFrame>
            <ThumbNumber>7</ThumbNumber>
            <ThumbFrame>
              <Thumb dim>
                <MiniGraph y={10} cx={40} step={11} />
                <MiniText y={38} w={60} />
                <MiniText y={42} x={19} w={76} /><MiniText y={44} x={19} w={76} /><MiniText y={47} x={19} w={60} />
                <MiniText y={50} w={56} /><MiniText y={58} w={78} /><MiniText y={60} w={70} />
                <MiniTable x={17} y={64} w={90} h={19} cols={18} />
                <MiniText y={86} /><MiniText y={88} /><MiniText y={90} /><MiniText y={92} /><MiniText y={94} w={12} />
                <MiniTable x={17} y={97} w={90} h={19} cols={18} />
                <MiniText y={118} w={60} />
              </Thumb>
            </ThumbFrame>
            <ThumbNumber>8</ThumbNumber>
            <ThumbFrame $selected>
              <Thumb>
                <MiniGraph y={6} cx={45} step={7} />
                <MiniText y={27} /><MiniText y={30} w={70} />
                <MiniTable x={17} y={33} w={90} h={19} cols={18} />
                <MiniText y={54} w={56} />
                <MiniGraph y={60} cx={45} step={7} />
                <MiniText y={79} /><MiniText y={81} /><MiniText y={84} w={55} />
                <MiniTable x={17} y={86} w={90} h={19} cols={18} />
                <MiniText y={107} w={30} />
                <MiniGraph y={112} cx={45} step={7} />
              </Thumb>
            </ThumbFrame>
            <ThumbNumber>9</ThumbNumber>
            <ThumbFrame>
              <Thumb dim>
                <MiniText y={9} /><MiniText y={11} /><MiniText y={13} w={45} />
                <rect x="60" y="11" width="2" height="3" fill="#000" />
                <MiniText y={20} x={15} w={48} />
                <MiniGraph y={27} cx={45} step={11} />
                <MiniText y={55} w={22} />
                <MiniText y={60} x={19} w={62} /><MiniText y={63} x={19} w={76} /><MiniText y={66} x={19} w={60} />
                <MiniText y={71} w={55} />
                <MiniTable x={24} y={78} w={64} h={19} cols={14} />
                <MiniText y={100} /><MiniText y={103} w={70} />
                <MiniTable x={24} y={106} w={64} h={19} cols={14} />
              </Thumb>
            </ThumbFrame>
          </ThumbList>
          <Track>
            <ScrollArrow />
            <ScrollThumb $top={312} $h={188} />
            <ScrollArrow $down />
          </Track>
        </Sidebar>

        <Viewer>
          <TopSheet $h={420}>
            <Matrix>
              <colgroup>
                <col width="35" />
                {Array.from({ length: 18 }, (_, i) => <col key={i} />)}
              </colgroup>
              <tbody>
                <tr>
                  <Cell $thickB={3} $thickR={2} $h={20} />
                  <HeadCell colSpan={6} $thickB={3} $thickR={2} $h={20}>Allocation</HeadCell>
                  <HeadCell colSpan={6} $thickB={3} $thickR={2} $h={20}>Request</HeadCell>
                  <HeadCell colSpan={6} $thickB={3} $h={20}>Available</HeadCell>
                </tr>
                <tr>
                  <Cell $thickB={2} $thickR={2} />
                  {Array.from({ length: 18 }, (_, i) => (
                    <HeadCell key={i} $thickB={2} $thickR={groupEdge(i)}>
                      R<Sub>{colNames[i % 6]}</Sub>
                    </HeadCell>
                  ))}
                </tr>
                {rows.map(r => (
                  <tr key={r.p}>
                    <HeadCell $thickB={r.b} $thickR={2}>P<Sub>{r.p}</Sub></HeadCell>
                    {r.values.map((v, i) => (
                      <Cell key={i} $thickB={r.b} $thickR={groupEdge(i)}>{v}</Cell>
                    ))}
                  </tr>
                ))}
              </tbody>
            </Matrix>
            <Caption>The resource allocation graph becomes:</Caption>
            <AllocationGraph />
          </TopSheet>

          <BottomSheet $h={300}>
            <RunningHead>
              <HeadTitle>CS4411 Operating Systems Homework 1 (Deadlock) Solutions – Spring 2019</HeadTitle>
              <HeadPage>10</HeadPage>
            </RunningHead>
            <Body>
              Next, we run <i>P</i><Sub>2</Sub> followed by <i>P</i><Sub>3</Sub>. In this way, all processes can run and obtain and release the needed resources. Consequently, there is no deadlock in the system. Thus, even though there are cycles in the given resource allocation graph, there is no deadlock!
              <Tombstone />
            </Body>
            <Question>
              6.&nbsp; <b>[10 points]</b> Consider the following resource allocation graph.
            </Question>
            <ConsiderGraph />
          </BottomSheet>

          <MainTrack>
            <ScrollArrow />
            <MainThumb $top={448} $h={34} />
            <ScrollArrow $down />
          </MainTrack>
        </Viewer>
      </Workspace>

      <ZoomTile>
        <ZoomAvatar>F</ZoomAvatar>
        <ZoomBar>
          <ZoomBarIcons width="222" height="41" viewBox="0 0 222 41">
            <path d="M15 20l9-8 9 8" fill="none" stroke="#c8c8c8" strokeWidth="2.500" />
            <path d="M6 37l10-14" stroke="#b02a2a" strokeWidth="1.200" />
            <rect x="8.500" y="25" width="5" height="9" rx="2.500" fill="#8c2323" />
            <rect x="78" y="9" width="10" height="17" rx="5" fill="#bdbdbd" />
            <path d="M75 19c0 12 16 12 16 0M83 28v5M78 33h10" fill="none" stroke="#bdbdbd" strokeWidth="1.500" />
            <path d="M70 36L93 9" stroke="#ef5350" strokeWidth="1.300" />
            <rect x="125" y="12" width="20" height="15" rx="2" fill="#c8c8c8" />
            <path d="M146 17l7-4v13l-7-4z" fill="#c8c8c8" />
            <path d="M121 36L149 9" stroke="#ef5350" strokeWidth="1.300" />
            <path d="M201 12h-8a5 5 0 0 0-5 5v8a5 5 0 0 0 5 5h8a5 5 0 0 0 5-5v-6" fill="none" stroke="#c8c8c8" strokeWidth="1.800" />
            <path d="M196 22l12-12M200 10h8v8" fill="none" stroke="#44a01f" strokeWidth="2" />
          </ZoomBarIcons>
          <ZoomName>SCES Online17</ZoomName>
        </ZoomBar>
      </ZoomTile>

      <Taskbar>
        <StartSlot><FaWindows size={17} /></StartSlot>
        <SearchBox>
          <SearchGlass size={19} strokeWidth={1.3} />
          Type here to search
        </SearchBox>
        <TrayButton $w={48}><RingIcon /></TrayButton>
        <TrayButton $w={46}><TaskView /></TrayButton>
        <TrayButton $w={9} />
        <TaskDivider />
        <TrayButton $w={14} />
        <AppSlot $open><Explorer /></AppSlot>
        <AppSlot $open><Xampp /></AppSlot>
        <AppSlot $open><Opera /></AppSlot>
        <AppSlot><Chrome /></AppSlot>
        <AppSlot $open $active><Chrome /><ProfileDot>a</ProfileDot></AppSlot>
        <AppSlot $open><AcrobatBox /></AppSlot>
        <AppSlot $open><Notes /></AppSlot>
        <AppSlot $open><VsCode /></AppSlot>
        <AppSlot $open><ZoomApp /></AppSlot>
        <TaskSpacer />
        <TrayButton $w={42}><HelpBadge /></TrayButton>
        <TrayButton $w={55} />
        <Weather><Cloud />{'21°C  Light rain'}</Weather>
        <TrayButton $w={16}><ChevronUp size={18} strokeWidth={1.6} /></TrayButton>
        <TrayButton $w={32}><Battery /></TrayButton>
        <TrayButton $w={18}><Wifi /></TrayButton>
        <TrayButton $w={26}><Speaker /></TrayButton>
        <Clock>
          <span>10:21 AM</span>
          <span>12/2/2021</span>
        </Clock>
        <Notify>
          <NoteIcon />
          <NotifyBadge>6</NotifyBadge>
        </Notify>
      </Taskbar>
    </Screen>
  );
}
